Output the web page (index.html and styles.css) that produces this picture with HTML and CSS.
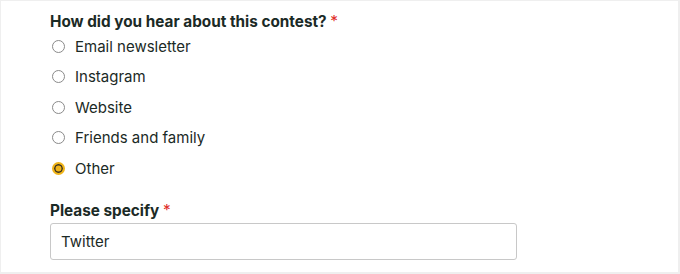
FILE: index.html
```html
<!DOCTYPE html>
<html lang="en">
<head>
    <meta charset="UTF-8">
    <meta name="viewport" content="width=device-width, initial-scale=1.0">
    <title>Contest Form</title>
    <link rel="stylesheet" href="styles.css">
</head>
<body>
    <div class="form-card">
        <!-- Source question -->
        <div class="field">
            <div class="field-label">How did you hear about this contest? <span class="required">*</span></div>
            <ul class="choices">
                <li><span class="radio"></span>Email newsletter</li>
                <li><span class="radio"></span>Instagram</li>
                <li><span class="radio"></span>Website</li>
                <li><span class="radio"></span>Friends and family</li>
                <li><span class="radio checked"></span>Other</li>
            </ul>
        </div>

        <!-- Other: specify -->
        <div class="field specify">
            <div class="field-label">Please specify <span class="required">*</span></div>
            <div class="text-input">Twitter</div>
        </div>
    </div>
</body>
</html>
```

FILE: styles.css
```css
html, body {
    height: 100%;
}
body {
    margin: 0;
    background-color: #efefef;
    font-family: Inter, "Noto Sans", sans-serif;
    color: #1b2a26;
    box-sizing: border-box;
    padding: 1px 2px 2px 1px;
}
.form-card {
    background-color: #fff;
    height: 100%;
    padding: 11px 0 0 49px;
    box-sizing: border-box;
}
.field-label {
    font-size: 15.3px;
    font-weight: 700;
    line-height: 19px;
    color: #1b2a26;
}
.required {
    color: #e02b27;
    font-weight: 400;
}
.choices {
    list-style: none;
    margin: 0;
    padding: 0;
}
.choices li {
    display: flex;
    align-items: center;
    height: 30.5px;
    font-size: 15px;
    color: #1b2a26;
}
.radio {
    width: 11px;
    height: 11px;
    border: 1px solid #8a8a8a;
    border-radius: 50%;
    margin: 0 10px 0 2px;
    background-color: #fff;
}
.radio.checked {
    width: 9px;
    height: 9px;
    border: 2px solid #f0b419;
    background-color: #f0b419;
    box-shadow: inset 0 0 0 1.5px #3b3320;
}
.specify {
    margin-top: 17px;
}
.text-input {
    margin-top: 3px;
    width: 445px;
    height: 35px;
    border: 1px solid #c8c8c8;
    border-radius: 3px;
    padding: 0 10px;
    font-size: 15px;
    line-height: 35px;
    color: #1b2a26;
}
```
